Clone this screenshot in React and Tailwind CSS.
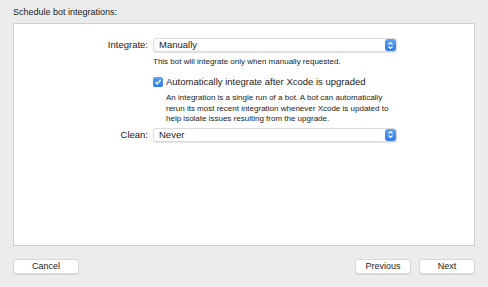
import React, { useState } from "react";

const Stepper = () => (
  <div className="w-[11px] h-[12px] rounded-[3px] bg-gradient-to-b from-[#5ea3f5] to-[#2f7ae6] flex items-center justify-center">
    <svg width="7" height="9" viewBox="0 0 7 9">
      <path d="M1.5 3.5 L3.5 1.5 L5.5 3.5" fill="none" stroke="white" strokeWidth="1.1" />
      <path d="M1.5 5.5 L3.5 7.5 L5.5 5.5" fill="none" stroke="white" strokeWidth="1.1" />
    </svg>
  </div>
);

const Select = ({ value }) => (
  <div className="w-[244px] h-[14px] bg-white border border-[#dcdcdc] rounded-[3px] shadow-[0_1px_1px_rgba(0,0,0,0.12)] flex items-center justify-between pl-[5px]">
    <span className="text-[9.5px] text-[#222] leading-none">{value}</span>
    <Stepper />
  </div>
);

const Button = ({ children, className }) => (
  <button className={`h-[15px] bg-white border border-[#d8d8d8] rounded-[3px] shadow-[0_1px_1px_rgba(0,0,0,0.1)] text-[9px] text-[#222] leading-none ${className}`}>
    {children}
  </button>
);

const App = () => {

  const [autoIntegrate, setAutoIntegrate] = useState(true);

  return (

    <div className="w-[488px] h-[287px] bg-[#ececec] text-[#222] font-['Liberation_Sans',Arial,sans-serif] px-[13px] pt-[8px] flex flex-col">

      {/* Title */}

      <p className="text-[9px] leading-none h-[15px]">
        Schedule bot integrations:
      </p>

      {/* Panel */}

      <div className="w-[462px] h-[223px] bg-white border border-[#cfcfcf] pt-[14px]">

        <div className="flex items-center">
          <span className="w-[134px] text-right text-[9.5px] leading-none">Integrate:</span>
          <div className="ml-[5px]">
            <Select value="Manually" />
          </div>
        </div>

        <p className="ml-[139px] mt-[6px] text-[8px] leading-none">
          This bot will integrate only when manually requested.
        </p>

        <label className="ml-[139px] mt-[11px] flex items-center gap-[3px]">
          <span
            onClick={() => setAutoIntegrate(!autoIntegrate)}
            className="w-[10px] h-[10px] rounded-[2px] bg-gradient-to-b from-[#5ea3f5] to-[#2f7ae6] flex items-center justify-center"
          >
            {autoIntegrate && (
              <svg width="8" height="8" viewBox="0 0 8 8">
                <path d="M1.5 4.2 L3.2 6 L6.6 1.8" fill="none" stroke="white" strokeWidth="1.3" />
              </svg>
            )}
          </span>
          <span className="text-[9.5px] leading-none">
            Automatically integrate after Xcode is upgraded
          </span>
        </label>

        <p className="ml-[152px] mt-[6px] w-[226px] text-[8px] leading-[10.5px]">
          An integration is a single run of a bot. A bot can automatically rerun its most recent integration whenever Xcode is updated to help isolate issues resulting from the upgrade.
        </p>

        <div className="flex items-center mt-[3px]">
          <span className="w-[134px] text-right text-[9.5px] leading-none">Clean:</span>
          <div className="ml-[5px]">
            <Select value="Never" />
          </div>
        </div>

      </div>

      {/* Buttons */}

      <div className="flex mt-[13px]">
        <Button className="w-[66px]">Cancel</Button>
        <div className="flex-1" />
        <Button className="w-[56px]">Previous</Button>
        <Button className="w-[56px] ml-[8px]">Next</Button>
      </div>

    </div>

  );

};

export default App;
